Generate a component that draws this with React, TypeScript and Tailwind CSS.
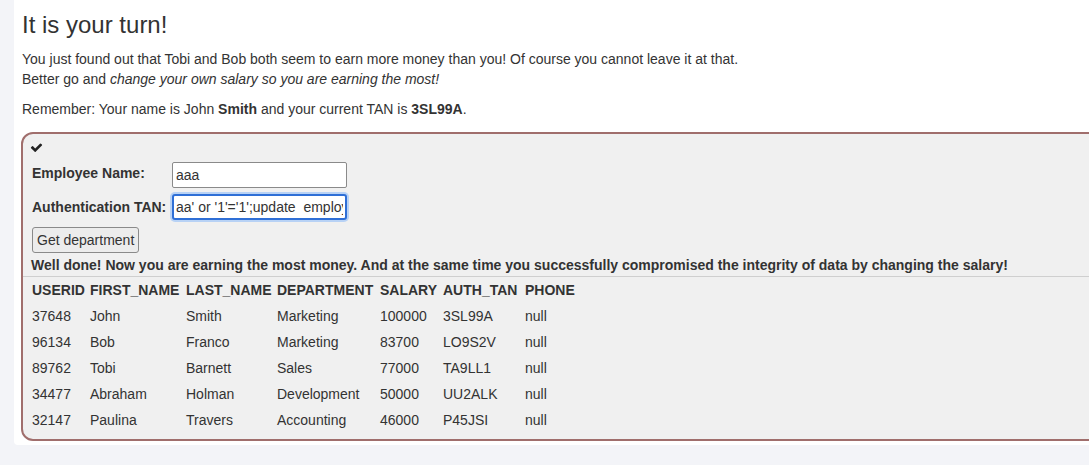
import React from 'react'

const rows = [
  ['37648', 'John', 'Smith', 'Marketing', '100000', '3SL99A', 'null'],
  ['96134', 'Bob', 'Franco', 'Marketing', '83700', 'LO9S2V', 'null'],
  ['89762', 'Tobi', 'Barnett', 'Sales', '77000', 'TA9LL1', 'null'],
  ['34477', 'Abraham', 'Holman', 'Development', '50000', 'UU2ALK', 'null'],
  ['32147', 'Paulina', 'Travers', 'Accounting', '46000', 'P45JSI', 'null'],
]
const headers = ['USERID', 'FIRST_NAME', 'LAST_NAME', 'DEPARTMENT', 'SALARY', 'AUTH_TAN', 'PHONE']
const widths = ['w-[58px]', 'w-[96px]', 'w-[91px]', 'w-[103px]', 'w-[63px]', 'w-[82px]', 'w-[60px]']

const App: React.FC = () => {
  return (
    <div className="w-[1089px] h-[465px] overflow-hidden bg-[#f3f4f8] text-[#333] text-[14px] leading-[20px] font-['Liberation_Sans',Arial,sans-serif]">
      <div className="ml-[14px] w-[1100px] h-[445px] bg-white rounded-bl-[4px] pl-[7px] pt-[12px]">
        <h3 className="pl-[1px] text-[24px] leading-[26px] font-normal mb-[11px]">It is your turn!</h3>
        <p className="pl-[1px] mb-[10px]">
          You just found out that Tobi and Bob both seem to earn more money than you! Of course you cannot leave it at that.
          <br />
          Better go and <em>change your own salary so you are earning the most!</em>
        </p>
        <p className="pl-[1px]">
          Remember: Your name is John <b>Smith</b> and your current TAN is <b>3SL99A</b>.
        </p>

        <div className="mt-[13px] w-[1100px] h-[309px] border-2 border-[#a06e6c] rounded-[12px] bg-[#f0f0f0] pl-[8px]">
          <div className="h-[20px] flex items-end -ml-[1px]">
            <svg viewBox="0 0 1792 1792" className="w-[13px] h-[13px] fill-[#222]">
              <path d="M1671 566q0 40-28 68l-724 724-136 136q-28 28-68 28t-68-28l-136-136-362-362q-28-28-28-68t28-68l136-136q28-28 68-28t68 28l294 295 656-657q28-28 68-28t68 28l136 136q28 28 28 68z" />
            </svg>
          </div>

          <div className="mt-[8px] flex flex-col gap-[6px]">
            <div className="flex items-center pl-[1px]">
              <label className="w-[140px] font-bold -mt-[5px]">Employee Name:</label>
              <input
                readOnly
                value="aaa"
                className="w-[175px] h-[26px] border border-[#8a8a8a] rounded-[2px] bg-white px-[3px] text-[14px] outline-none"
              />
            </div>
            <div className="flex items-center pl-[1px]">
              <label className="w-[140px] font-bold">Authentication TAN:</label>
              <input
                readOnly
                value="aa' or '1'='1';update  employees"
                className="w-[175px] h-[26px] border-2 border-[#2f6fd6] rounded-[3px] bg-white px-[2px] text-[14px] outline-none ring-2 ring-[#b8d2f5] overflow-hidden"
              />
            </div>
          </div>

          <button className="mt-[7px] ml-[1px] h-[26px] px-[4px] border border-[#8a8a8a] rounded-[3px] bg-[#ececec] text-[14px] leading-[20px]">
            Get department
          </button>

          <div className="mt-[2px] font-bold">
            Well done! Now you are earning the most money. And at the same time you successfully compromised the integrity of data by changing the salary!
          </div>
          <div className="mt-[1px] -ml-[8px] border-t border-[#cfcfcf]" />

          <table className="border-collapse ml-[1px]">
            <thead>
              <tr className="h-[26px]">
                {headers.map((h, i) => (
                  <th key={h} className={`${widths[i]} text-left font-bold p-0 align-middle`}>{h}</th>
                ))}
              </tr>
            </thead>
            <tbody>
              {rows.map((r) => (
                <tr key={r[0]} className="h-[26px]">
                  {r.map((c, i) => (
                    <td key={i} className="p-0 align-middle">{c}</td>
                  ))}
                </tr>
              ))}
            </tbody>
          </table>
        </div>
      </div>
    </div>
  )
}

export default App
